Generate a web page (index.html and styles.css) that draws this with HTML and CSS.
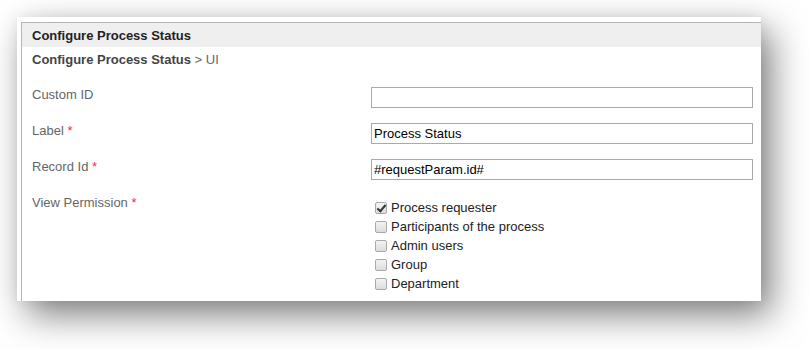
FILE: index.html
```html
<!DOCTYPE html>
<html lang="en">
<head>
    <meta charset="UTF-8">
    <meta name="viewport" content="width=device-width, initial-scale=1.0">
    <title>Configure Process Status</title>
    <link rel="stylesheet" href="styles.css">
</head>
<body>
    <div class="shot">
        <div class="panel">
            <div class="panel-title">Configure Process Status</div>
            <div class="crumbs"><b>Configure Process Status</b> &gt; UI</div>

            <form class="form">
                <div class="row">
                    <label>Custom ID</label>
                    <input type="text" class="text-field" value="">
                </div>
                <div class="row">
                    <label>Label <span class="req">*</span></label>
                    <input type="text" class="text-field" value="Process Status">
                </div>
                <div class="row">
                    <label>Record Id <span class="req">*</span></label>
                    <input type="text" class="text-field" value="#requestParam.id#">
                </div>
                <div class="row">
                    <label>View Permission <span class="req">*</span></label>
                    <ul class="checks">
                        <li><input type="checkbox" checked> Process requester</li>
                        <li><input type="checkbox"> Participants of the process</li>
                        <li><input type="checkbox"> Admin users</li>
                        <li><input type="checkbox"> Group</li>
                        <li><input type="checkbox"> Department</li>
                    </ul>
                </div>
            </form>
        </div>
    </div>
</body>
</html>
```

FILE: styles.css
```css
html, body {
    height: 100%;
}

body {
    box-sizing: border-box;
    margin: 0;
    padding: 17px;
    background: #ffffff;
    font-family: 'Liberation Sans', Arial, sans-serif;
    font-size: 13px;
}

.shot {
    width: 744px;
    height: 284px;
    background: #ffffff;
    overflow: hidden;
    box-shadow: 10px 14px 34px rgba(0, 0, 0, 0.5), 0 0 14px rgba(0, 0, 0, 0.07);
}

.panel {
    margin: 5px 0 0 4px;
    height: 100%;
    border-top: 1px solid #b5b5b5;
    border-left: 1px solid #b5b5b5;
}

.panel-title {
    height: 23px;
    padding: 1px 0 0 10px;
    line-height: 24px;
    background: #efefef;
    color: #222;
    font-weight: bold;
}

.crumbs {
    height: 23px;
    padding: 1px 0 0 10px;
    line-height: 24px;
    color: #666;
}

.crumbs b {
    color: #444;
}

.form {
    padding: 13px 0 0 10px;
}

.row {
    display: grid;
    grid-template-columns: 339px 382px;
    min-height: 36px;
    align-items: start;
}

.row label {
    padding-top: 3px;
    line-height: 16px;
    color: #666;
}

.req {
    color: #e33;
}

.text-field {
    box-sizing: border-box;
    width: 382px;
    height: 21px;
    margin: 3px 0 0;
    padding: 0 2px;
    border: 1px solid #aaa;
    border-radius: 0;
    font-family: inherit;
    font-size: 13px;
    color: #000;
    outline: none;
}

.checks {
    list-style: none;
    margin: 6px 0 0;
    padding: 0 0 0 4px;
}

.checks li {
    display: flex;
    align-items: center;
    height: 19px;
    color: #222;
}

.checks input {
    appearance: none;
    -webkit-appearance: none;
    position: relative;
    box-sizing: border-box;
    width: 12px;
    height: 12px;
    margin: 0 4px 0 0;
    border: 1px solid #a9a9a9;
    border-radius: 2px;
    background: linear-gradient(#f4f4f4, #dcdcdc);
}

.checks input:checked::after {
    content: "";
    position: absolute;
    left: 3px;
    top: 0;
    width: 3px;
    height: 7px;
    border: solid #333;
    border-width: 0 2px 2px 0;
    transform: rotate(40deg);
}
```
